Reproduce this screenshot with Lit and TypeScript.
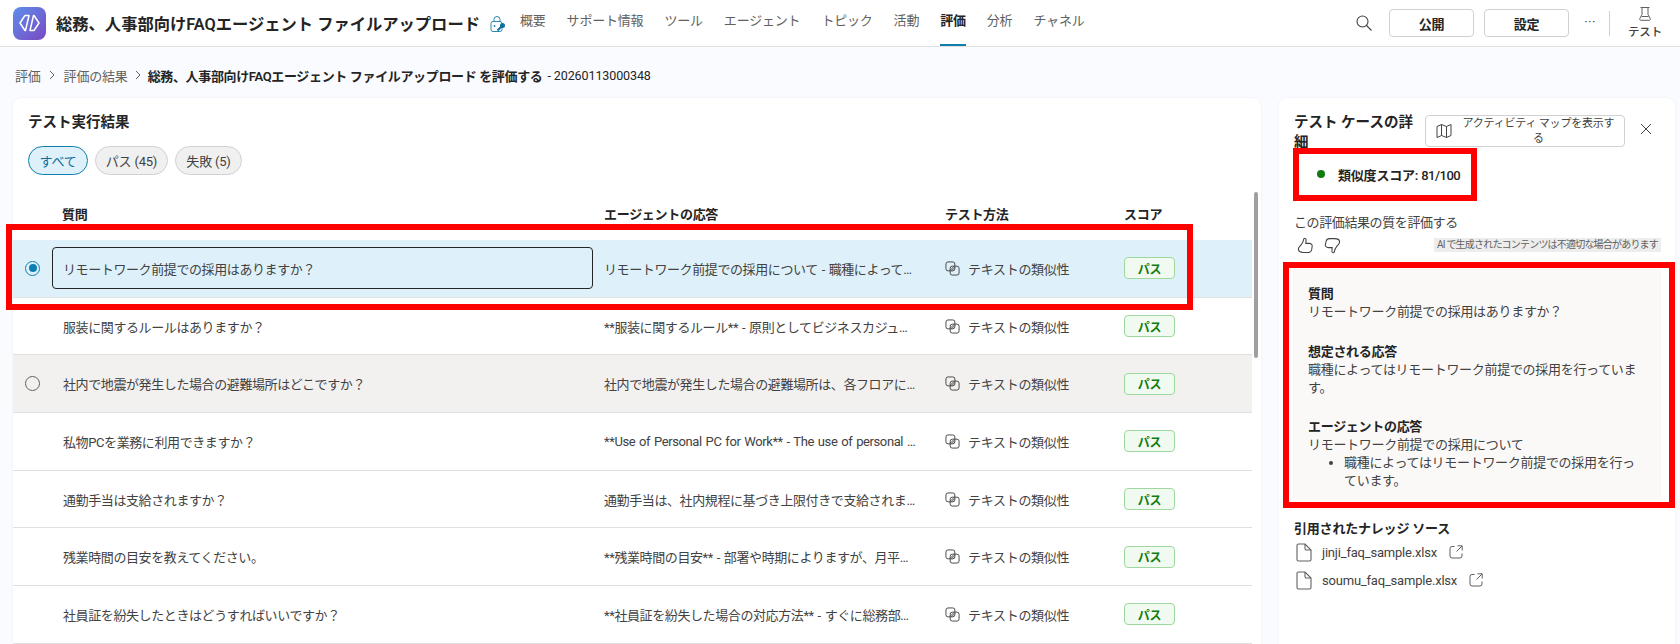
import { LitElement, html, css, svg } from "lit";
import { customElement } from "lit/decorators.js";

const NAV = ["概要", "サポート情報", "ツール", "エージェント", "トピック", "活動", "評価", "分析", "チャネル"];
const ROWS = [
  ["リモートワーク前提での採用はありますか？", "リモートワーク前提での採用について - 職種によって…"],
  ["服装に関するルールはありますか？", "**服装に関するルール** - 原則としてビジネスカジュ…"],
  ["社内で地震が発生した場合の避難場所はどこですか？", "社内で地震が発生した場合の避難場所は、各フロアに…"],
  ["私物PCを業務に利用できますか？", "**Use of Personal PC for Work** - The use of personal …"],
  ["通勤手当は支給されますか？", "通勤手当は、社内規程に基づき上限付きで支給されま…"],
  ["残業時間の目安を教えてください。", "**残業時間の目安** - 部署や時期によりますが、月平…"],
  ["社員証を紛失したときはどうすればいいですか？", "**社員証を紛失した場合の対応方法** - すぐに総務部…"],
];
const TITLE = "総務、人事部向けFAQエージェント ファイルアップロード";

const simIcon = svg`<svg class="sim" width="15" height="15" viewBox="0 0 16 16" fill="none" stroke="#424242" stroke-width="1"><rect x="1" y="1" width="9.5" height="9.5" rx="2.2"/><rect x="5.500" y="5.500" width="9.5" height="9.5" rx="2.2"/><path d="M5.800 9.600 9.600 5.800M7 10.400 10.400 7" stroke-width="1"/></svg>`;
const fileIcon = svg`<svg width="16" height="19" viewBox="0 0 16 19" fill="none" stroke="#616161" stroke-width="1.1"><path d="M1 2.500A1.500 1.500 0 0 1 2.500 1H9l6 6v9.500a1.500 1.500 0 0 1-1.500 1.500h-11A1.500 1.500 0 0 1 1 16.500Z"/><path d="M9 1v4.500A1.500 1.500 0 0 0 10.500 7H15"/></svg>`;
const extIcon = svg`<svg width="14" height="14" viewBox="0 0 14 14" fill="none" stroke="#616161" stroke-width="1"><path d="M5.500 1.500H3A2 2 0 0 0 1 3.500v7.500a2 2 0 0 0 2 2h8a2 2 0 0 0 2-2V8.500"/><path d="M8.500 .8h4.700v4.700M13 1 7.500 6.500"/></svg>`;

@customElement("app-root")
export class AppRoot extends LitElement {
  static styles = css`
    :host {
      display: block;
      position: relative;
      height: 644px;
      overflow: hidden;
      background: #fafbfe;
      color: #242424;
      font-family: Roboto, "Noto Sans CJK JP", sans-serif;
      font-size: 13px;
      letter-spacing: -0.2px;
    }
    svg { display: block; flex: none; }
    header {
      height: 46px;
      border-bottom: 1px solid #e0e0e0;
      background: #fff;
      display: flex;
      align-items: center;
      padding-left: 13px;
    }
    .logo {
      width: 33px;
      height: 33px;
      border-radius: 8px;
      background: linear-gradient(135deg, #5c90ea, #7b48c4);
      display: flex;
      align-items: center;
      justify-content: center;
      margin-right: 10px;
    }
    .app-title { font-size: 16.3px; font-weight: 600; white-space: nowrap; width: 431px; letter-spacing: 0; }
    .lock { margin: 2px 0 0 3px; }
    nav { display: flex; height: 46px; gap: 21px; margin-left: 14px; }
    nav a {
      display: flex;
      align-items: center;
      color: #616161;
      white-space: nowrap;
      box-sizing: border-box;
      height: 46px;
      padding-bottom: 6px;
      border-bottom: 2px solid transparent;
    }
    nav a.on { color: #242424; font-weight: 600; border-bottom-color: #0f7faf; }
    .actions { margin-left: auto; display: flex; align-items: center; height: 46px; }
    .search { margin-right: 17px; }
    .btn {
      width: 85px;
      height: 28px;
      box-sizing: border-box;
      border: 1px solid #d1d1d1;
      border-radius: 4px;
      background: #fff;
      display: flex;
      align-items: center;
      justify-content: center;
      font-weight: 600;
      margin-right: 10px;
    }
    .more { width: 22px; text-align: center; margin: 0 8px 4px 0; color: #424242; letter-spacing: 0.5px; }
    .sep { width: 1px; height: 25px; background: #d1d1d1; }
    .test {
      width: 70px;
      display: flex;
      flex-direction: column;
      align-items: center;
      gap: 2px;
      font-size: 11.5px;
      font-weight: 500;
      color: #424242;
    }
    .crumbs {
      height: 51px;
      display: flex;
      align-items: center;
      padding: 5px 0 0 15px;
      box-sizing: border-box;
      white-space: nowrap;
      color: #616161;
    }
    .crumbs svg { margin: 0 7.5px; }
    .crumbs svg.next { margin: 0 6px; }
    .crumbs b { color: #242424; font-weight: 600; letter-spacing: -0.35px; }
    .crumbs span.id { color: #242424; margin-left: 5px; font-size: 12.5px; letter-spacing: -0.1px; }
    main {
      display: grid;
      grid-template-columns: 1248px 396px;
      gap: 18px;
      padding-left: 13px;
    }
    .card {
      background: #fff;
      border-radius: 8px 8px 0 0;
      box-shadow: 0 0 2px rgba(0, 0, 0, 0.08);
      height: 546px;
      overflow: hidden;
      position: relative;
    }
    .card h2 { margin: 0; font-size: 14.5px; font-weight: 600; line-height: 20px; letter-spacing: 0; }
    .results h2 { padding: 15px 0 0 15px; }
    .pills { display: flex; gap: 7px; padding: 13px 0 0 15px; }
    .pill {
      height: 29px;
      box-sizing: border-box;
      border: 1px solid #d1d1d1;
      border-radius: 15px;
      background: #f0f0f0;
      color: #424242;
      padding: 0 11px;
      display: flex;
      align-items: center;
      white-space: nowrap;
    }
    .pill.on { background: #def1fa; border-color: #0f7faf; color: #0f6f9c; width: 60px; box-sizing: border-box; justify-content: center; padding: 0; }
    .pill.pass { width: 73px; justify-content: center; padding: 0; }
    .pill.fail { width: 67px; justify-content: center; padding: 0; }
    .table { margin-right: 9px; padding-top: 14px; }
    .grid { display: grid; grid-template-columns: 39px 552px 341px 179px 128px; align-items: center; }
    .thead { height: 51px; font-weight: 600; padding-bottom: 3px; box-sizing: border-box; letter-spacing: -0.3px; }
    .thead div:nth-child(2) { padding-left: 10px; }
    .row { height: 57.7px; box-sizing: border-box; border-bottom: 1px solid #e0e0e0; }
    .row:first-of-type { border-top: 1px solid #e0e0e0; }
    .row.sel { background: #def1fa; }
    .row.hover { background: #f3f1f0; }
    .radio { width: 15px; height: 15px; box-sizing: border-box; border-radius: 50%; border: 1px solid #616161; margin-left: 12px; position: relative; }
    .radio.on { border-color: #0f7faf; }
    .radio.on::after { content: ""; position: absolute; inset: 2.5px; border-radius: 50%; background: #0f7faf; }
    .q {
      color: #424242;
      white-space: nowrap;
      margin-right: 11px;
      height: 42px;
      box-sizing: border-box;
      padding-left: 10px;
      display: flex;
      align-items: center;
      border: 1px solid transparent;
      border-radius: 4px;
      letter-spacing: -0.4px;
    }
    .row.sel .q { border-color: #242424; }
    .a { color: #424242; white-space: nowrap; overflow: hidden; letter-spacing: -0.4px; word-spacing: 1px; }
    .m { display: flex; align-items: center; gap: 8px; color: #424242; white-space: nowrap; letter-spacing: -0.3px; }
    .badge {
      width: 51px;
      height: 22px;
      box-sizing: border-box;
      border: 1px solid #9fd89f;
      border-radius: 4px;
      background: #f1faf1;
      color: #107c10;
      font-size: 12px;
      font-weight: 600;
      display: flex;
      align-items: center;
      justify-content: center;
    }
    .scroll { position: absolute; right: 3px; top: 94px; width: 4px; height: 166px; border-radius: 2px; background: #a0a0a0; }

    .detail { padding: 15px 14px 0 15px; }
    .d-head { display: flex; align-items: flex-start; }
    .d-head h2 { width: 131px; flex: none; line-height: 20px; }
    .map {
      width: 200px;
      height: 32px;
      box-sizing: border-box;
      margin: 2px 0 0 0;
      border: 1px solid #d1d1d1;
      border-radius: 4px;
      display: flex;
      align-items: center;
      padding: 0 8px 0 10px;
      gap: 9px;
      font-size: 11px;
      line-height: 15px;
      color: #424242;
      text-align: center;
    }
    .close { margin: 10px 0 0 15px; }
    .score {
      display: flex;
      align-items: center;
      gap: 13px;
      height: 20px;
      margin: 11px 0 0 23px;
      font-weight: 600;
    }
    .score em { font-style: normal; font-weight: 500; letter-spacing: -0.5px; }
    .dot { width: 8px; height: 8px; border-radius: 50%; background: #107c10; }
    .rate { margin-top: 30px; line-height: 18px; color: #424242; letter-spacing: -0.4px; }
    .thumbs { display: flex; align-items: center; margin-top: 3px; height: 20px; padding-left: 3px; gap: 10px; }
    .note {
      margin-left: auto;
      background: #ededed;
      color: #616161;
      font-size: 10px;
      letter-spacing: -0.8px;
      line-height: 14px;
      padding: 0 3px;
      white-space: nowrap;
    }
    .body {
      margin: 14px 0 0 -1px;
      width: 368px;
      box-sizing: border-box;
      background: #faf9f8;
      padding: 16px 15px 9px 15px;
      line-height: 18px;
      color: #424242;
      display: flex;
      flex-direction: column;
      gap: 21.5px;
      letter-spacing: -0.3px;
    }
    .body b { display: block; color: #242424; font-weight: 600; }
    .body ul { margin: 0; padding-left: 36px; }
    .src-h { margin-top: 21px; font-weight: 600; line-height: 18px; }
    .src { display: flex; align-items: center; height: 28px; color: #424242; padding-left: 2px; }
    .src span { margin: 0 12px 0 10px; font-size: 13px; }
    .mark { position: absolute; border: 6px solid #ff0000; box-sizing: border-box; pointer-events: none; }
    .mark.m1 { left: 6px; top: 224px; width: 1187px; height: 86px; }
    .mark.m2 { left: 1293px; top: 148px; width: 184px; height: 53px; }
    .mark.m3 { left: 1283px; top: 262px; width: 392px; height: 246px; }
  `;

  private logo() {
    return svg`<svg width="21" height="18" viewBox="0 0 21 18" fill="none" stroke="#fff" stroke-width="1.5" stroke-linejoin="round"><path d="M6 1.500h4L6.500 16.500H6L1 9Z"/><path d="M15 16.500h-4L14.500 1.500H15L20 9Z"/></svg>`;
  }

  render() {
    return html`
      <header>
        <div class="logo">${this.logo()}</div>
        <div class="app-title">${TITLE}</div>
        <svg class="lock" width="16" height="18" viewBox="0 0 16 18" fill="none">
          <path d="M4 7V4.500a3 3 0 0 1 6 0V7" stroke="#2b88b0" stroke-width="1"/>
          <rect x="1" y="6.500" width="11" height="10" rx="2" stroke="#2b88b0" stroke-width="1"/>
          <circle cx="4.500" cy="11" r="1" fill="#2b88b0"/>
          <circle cx="12.500" cy="10.500" r="2.500" fill="#0f6f9c"/>
          <path d="M11.500 11.500 7.500 15.500" stroke="#0f6f9c" stroke-width="2"/>
        </svg>
        <nav>${NAV.map((n) => html`<a class=${n === "評価" ? "on" : ""}>${n}</a>`)}</nav>
        <div class="actions">
          <svg class="search" width="16" height="16" viewBox="0 0 16 16" fill="none" stroke="#424242" stroke-width="1.100"><circle cx="6.500" cy="6.500" r="5.500"/><path d="m10.500 10.500 5 5"/></svg>
          <div class="btn">公開</div>
          <div class="btn">設定</div>
          <div class="more">···</div>
          <div class="sep"></div>
          <div class="test">
            <svg width="12" height="14" viewBox="0 0 12 14" fill="none" stroke="#616161" stroke-width="1"><path d="M1.500 .5h9M3 .5v7L.8 11.500a1.200 1.200 0 0 0 1 1.800h8.400a1.200 1.200 0 0 0 1-1.800L9 7.500v-7M2.500 9.500h7"/></svg>
            <span>テスト</span>
          </div>
        </div>
      </header>
      <div class="crumbs">
        <span>評価</span>
        <svg width="8" height="10" viewBox="0 0 8 10" fill="none" stroke="#616161"><path d="m2 1 4 4-4 4"/></svg>
        <span>評価の結果</span>
        <svg class="next" width="8" height="10" viewBox="0 0 8 10" fill="none" stroke="#616161"><path d="m2 1 4 4-4 4"/></svg>
        <b>${TITLE} を評価する</b><span class="id">- 20260113000348</span>
      </div>
      <main>
        <section class="card results">
          <h2>テスト実行結果</h2>
          <div class="pills">
            <div class="pill on">すべて</div>
            <div class="pill pass">パス (45)</div>
            <div class="pill fail">失敗 (5)</div>
          </div>
          <div class="table">
            <div class="grid thead"><div></div><div>質問</div><div>エージェントの応答</div><div>テスト方法</div><div>スコア</div></div>
            ${ROWS.map(
              (r, i) => html`
                <div class="grid row ${i === 0 ? "sel" : i === 2 ? "hover" : ""}">
                  <div>${i === 0 ? html`<div class="radio on"></div>` : i === 2 ? html`<div class="radio"></div>` : ""}</div>
                  <div class="q">${r[0]}</div>
                  <div class="a">${r[1]}</div>
                  <div class="m">${simIcon}テキストの類似性</div>
                  <div><div class="badge">パス</div></div>
                </div>
              `
            )}
          </div>
          <div class="scroll"></div>
        </section>
        <aside class="card detail">
          <div class="d-head">
            <h2>テスト ケースの詳細</h2>
            <div class="map">
              <svg width="16" height="16" viewBox="0 0 16 16" fill="none" stroke="#424242"><path d="M1 3.500 5.500 1.500l5 2 4.500-2v11l-4.500 2-5-2L1 14.500ZM5.500 1.500v11M10.500 3.500v11"/></svg>
              <span>アクティビティ マップを表示する</span>
            </div>
            <svg class="close" width="12" height="12" viewBox="0 0 12 12" stroke="#424242"><path d="m1 1 10 10M11 1 1 11"/></svg>
          </div>
          <div class="score"><i class="dot"></i><span>類似度スコア: <em>81/100</em></span></div>
          <div class="rate">この評価結果の質を評価する</div>
          <div class="thumbs">
            <svg width="17" height="17" viewBox="0 0 16 16" fill="none" stroke="#424242"><path d="M6.500 1.500c1.500-.8 2.300.5 2 2L8.300 6h3.200c1.500 0 3 1 2.800 2.600l-.5 3.400c-.3 1.700-1.500 2.500-3.300 2.500H6c-2.500 0-4.500-1-4.700-2.800C1.100 10 2.700 8.500 4 7.200 5 6 6 4 6.500 1.500Z"/></svg>
            <svg width="17" height="17" viewBox="0 0 16 16" fill="none" stroke="#424242"><path d="M9.500 14.500c-1.500.8-2.300-.5-2-2L7.700 10H4.500C3 10 1 9 1.200 7.400L2 4C2.300 2.300 3.500 1.500 5.300 1.500H10c2.500 0 4.500 1 4.700 2.800.2 1.700-1.400 3.200-2.700 4.500-1 1.200-2 3.200-2.500 5.700Z"/></svg>
            <div class="note">AI で生成されたコンテンツは不適切な場合があります</div>
          </div>
          <div class="body">
            <div><b>質問</b>リモートワーク前提での採用はありますか？</div>
            <div><b>想定される応答</b>職種によってはリモートワーク前提での採用を行っています。</div>
            <div><b>エージェントの応答</b>リモートワーク前提での採用について
              <ul><li>職種によってはリモートワーク前提での採用を行っています。</li></ul>
            </div>
          </div>
          <div class="src-h">引用されたナレッジ ソース</div>
          <div class="src">${fileIcon}<span>jinji_faq_sample.xlsx</span>${extIcon}</div>
          <div class="src">${fileIcon}<span>soumu_faq_sample.xlsx</span>${extIcon}</div>
        </aside>
      </main>
      <div class="mark m1"></div>
      <div class="mark m2"></div>
      <div class="mark m3"></div>
    `;
  }
}
